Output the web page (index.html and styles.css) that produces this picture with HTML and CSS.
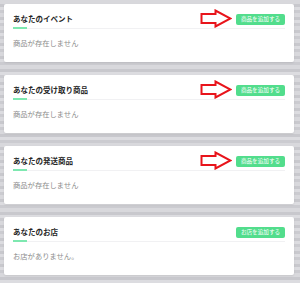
FILE: index.html
```html
<!DOCTYPE html>
<html lang="ja">
<head>
<meta charset="utf-8">
<link rel="stylesheet" href="styles.css">
</head>
<body>
<div class="list">
  <section class="card">
    <div class="card-head">
      <h2 class="title">あなたのイベント</h2>
      <svg class="arrow" width="32" height="19" viewBox="0 0 32 19"><path d="M1.5 5 H15.5 V1.5 L30.5 9.5 L15.5 17.5 V14 H1.5 Z" fill="#fff" stroke="#e8141b" stroke-width="2" stroke-linejoin="miter"/></svg>
      <button class="btn">商品を追加する</button>
    </div>
    <p class="empty">商品が存在しません</p>
  </section>
  <section class="card">
    <div class="card-head">
      <h2 class="title">あなたの受け取り商品</h2>
      <svg class="arrow" width="32" height="19" viewBox="0 0 32 19"><path d="M1.5 5 H15.5 V1.5 L30.5 9.5 L15.5 17.5 V14 H1.5 Z" fill="#fff" stroke="#e8141b" stroke-width="2" stroke-linejoin="miter"/></svg>
      <button class="btn">商品を追加する</button>
    </div>
    <p class="empty">商品が存在しません</p>
  </section>
  <section class="card">
    <div class="card-head">
      <h2 class="title">あなたの発送商品</h2>
      <svg class="arrow" width="32" height="19" viewBox="0 0 32 19"><path d="M1.5 5 H15.5 V1.5 L30.5 9.5 L15.5 17.5 V14 H1.5 Z" fill="#fff" stroke="#e8141b" stroke-width="2" stroke-linejoin="miter"/></svg>
      <button class="btn">商品を追加する</button>
    </div>
    <p class="empty">商品が存在しません</p>
  </section>
  <section class="card">
    <div class="card-head">
      <h2 class="title">あなたのお店</h2>
      <button class="btn">お店を追加する</button>
    </div>
    <p class="empty">お店がありません。</p>
  </section>
</div>
</body>
</html>
```
FILE: styles.css
```css
html, body {
  margin: 0;
  padding: 0;
}
body {
  width: 300px;
  height: 283px;
  overflow: hidden;
  font-family: "Noto Sans CJK JP", "Noto Sans", sans-serif;
  background-color: #cfcfd4;
  background-image: repeating-linear-gradient(180deg, #d8d8dc 0px, #d8d8dc 4px, #c8c8cd 4px, #c8c8cd 7px, #dcdce0 7px, #dcdce0 10px, #cbcbd0 10px, #cbcbd0 13px);
}
.list {
  display: flex;
  flex-direction: column;
  gap: 13px;
  padding: 4px 6px 0 4px;
}
.card {
  position: relative;
  height: 58px;
  box-sizing: border-box;
  background: #fff;
  border-radius: 2px;
  padding: 0 9px;
  box-shadow: 0 1px 2px rgba(0,0,0,0.08);
}
.card-head {
  position: relative;
  display: flex;
  align-items: center;
  justify-content: space-between;
  height: 12px;
  padding: 9px 0 3px;
  border-bottom: 1px solid #f1f1f3;
}
.card-head::after {
  content: "";
  position: absolute;
  left: 0;
  bottom: -1px;
  width: 14px;
  height: 2px;
  background: #7ee8b0;
}
.title {
  margin: 0;
  font-size: 7.5px;
  font-weight: 700;
  color: #262626;
  line-height: 10px;
}
.btn {
  margin-left: auto;
  height: 11px;
  width: 49px;
  padding: 0;
  border: none;
  border-radius: 2px;
  background: #52dd8c;
  color: #fff;
  font-family: inherit;
  font-size: 5.6px;
  line-height: 11px;
  text-align: center;
}
.arrow {
  position: absolute;
  right: 53px;
  top: 5px;
}
.empty {
  margin: 9px 0 0;
  font-size: 7.3px;
  line-height: 10px;
  color: #8c8c8c;
}
```
